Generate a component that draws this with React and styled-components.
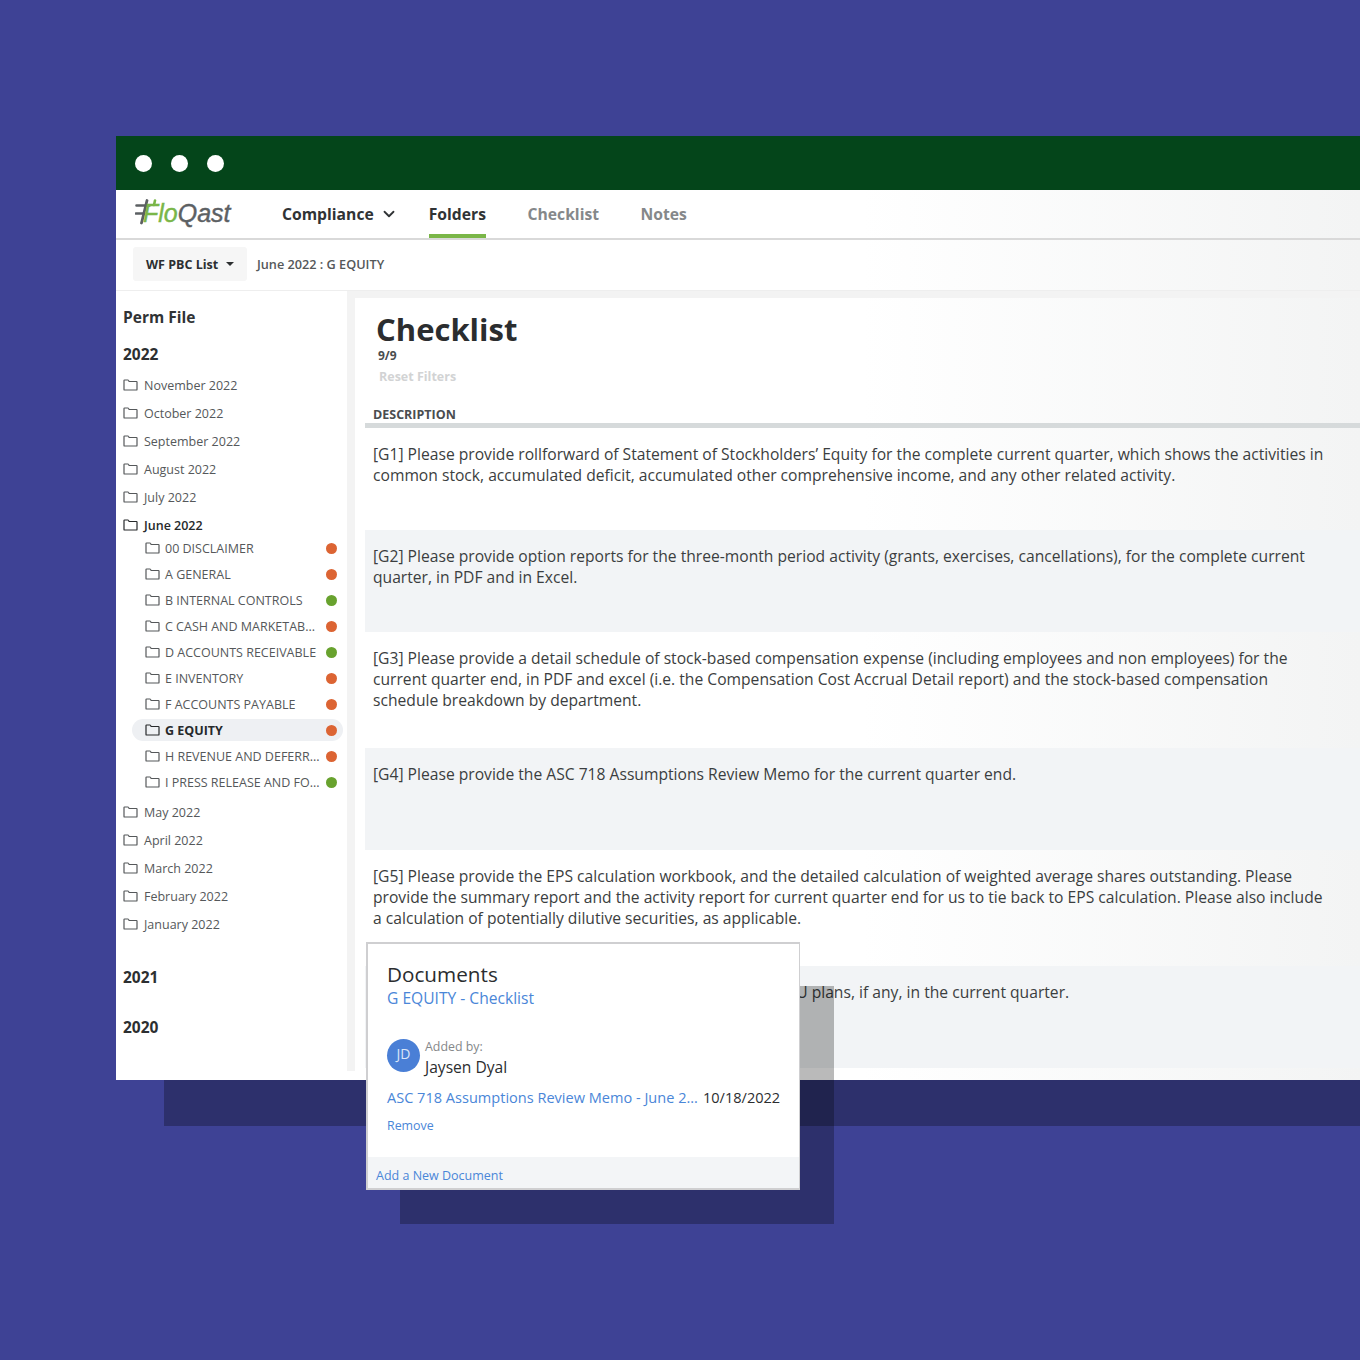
import React from "react";
import styled, { createGlobalStyle } from "styled-components";
import { ChevronDown } from "lucide-react";

const months2022 = ["November 2022", "October 2022", "September 2022", "August 2022", "July 2022"];
const monthsAfter = ["May 2022", "April 2022", "March 2022", "February 2022", "January 2022"];

const folders = [
  { name: "00 DISCLAIMER", status: "late" },
  { name: "A GENERAL", status: "late" },
  { name: "B INTERNAL CONTROLS", status: "done" },
  { name: "C CASH AND MARKETAB...", status: "late" },
  { name: "D ACCOUNTS RECEIVABLE", status: "done" },
  { name: "E INVENTORY", status: "late" },
  { name: "F ACCOUNTS PAYABLE", status: "late" },
  { name: "G EQUITY", status: "late", active: true },
  { name: "H REVENUE AND DEFERR...", status: "late" },
  { name: "I PRESS RELEASE AND FO...", status: "done" },
];

const requests = [
  "[G1] Please provide rollforward of Statement of Stockholders’ Equity for the complete current quarter, which shows the activities in common stock, accumulated deficit, accumulated other comprehensive income, and any other related activity.",
  "[G2] Please provide option reports for the three-month period activity (grants, exercises, cancellations), for the complete current quarter, in PDF and in Excel.",
  "[G3] Please provide a detail schedule of stock-based compensation expense (including employees and non employees) for the current quarter end, in PDF and excel (i.e. the Compensation Cost Accrual Detail report) and the stock-based compensation schedule breakdown by department.",
  "[G4] Please provide the ASC 718 Assumptions Review Memo for the current quarter end.",
  "[G5] Please provide the EPS calculation workbook, and the detailed calculation of weighted average shares outstanding. Please provide the summary report and the activity report for current quarter end for us to tie back to EPS calculation. Please also include a calculation of potentially dilutive securities, as applicable.",
  "[G6] Please provide a summary of any changes to ESPP/RSU plans, if any, in the current quarter.",
];

const FolderIcon = ({ size = 15 }) => (
  <svg width={size} height={size - 3} viewBox="0 0 15 12" fill="none" stroke="currentColor" strokeWidth="1.2">
    <path d="M1 10.4V1.6c0-.4.2-.6.6-.6h3.2c.3 0 .5.1.6.3l.7 1.2h7.3c.4 0 .6.2.6.6v7.3c0 .4-.2.6-.6.6H1.6c-.4 0-.6-.2-.6-.6z" />
  </svg>
);

const HashMark = () => (
  <svg width="22" height="26" viewBox="0 0 22 26" fill="none" strokeLinecap="round">
    <path d="M1.5 6.5h13M1 14.5h8" stroke="#5c6063" strokeWidth="2.6" />
    <path d="M12 1.5 6.5 24" stroke="#5c6063" strokeWidth="2.8" />
    <path d="M20 1.5l-1 4.5" stroke="#7ab648" strokeWidth="2.6" />
  </svg>
);

export default function App() {
  return (
    <>
      <GlobalStyle />
      <Scene>
        <Window>
          <TitleBar>
            <Light />
            <Light />
            <Light />
          </TitleBar>

          <NavBar>
            <Logo>
              <HashMark />
              <LogoWord>
                <em>Flo</em>Qast
              </LogoWord>
            </Logo>
            <NavItem $strong $tight>
              Compliance <ChevronDown size={18} strokeWidth={2.4} />
            </NavItem>
            <NavItem $strong $active>Folders</NavItem>
            <NavItem>Checklist</NavItem>
            <NavItem>Notes</NavItem>
          </NavBar>

          <SubBar>
            <ListButton>
              WF PBC List <Caret />
            </ListButton>
            <Crumb>June 2022 : G EQUITY</Crumb>
          </SubBar>

          <Body>
            <Sidebar>
              <Heading>Perm File</Heading>
              <Year>2022</Year>
              {months2022.map((m) => (
                <Month key={m}>
                  <FolderIcon />
                  {m}
                </Month>
              ))}
              <Month $open>
                <FolderIcon />
                June 2022
              </Month>
              <FolderList>
                {folders.map((f) => (
                  <FolderRow key={f.name} $active={f.active}>
                    <FolderIcon size={15} />
                    <FolderName>{f.name}</FolderName>
                    <Dot $status={f.status} />
                  </FolderRow>
                ))}
              </FolderList>
              {monthsAfter.map((m) => (
                <Month key={m}>
                  <FolderIcon />
                  {m}
                </Month>
              ))}
              <Year $gap={26}>2021</Year>
              <Year $gap={24}>2020</Year>
            </Sidebar>

            <Main>
              <Title>Checklist</Title>
              <Count>9/9</Count>
              <Reset>Reset Filters</Reset>
              <TableHead>DESCRIPTION</TableHead>
              {requests.map((r, i) => (
                <Row key={r.slice(0, 4)} $shaded={i % 2 === 1}>
                  {r}
                </Row>
              ))}
            </Main>
          </Body>

          <Popup>
            <Card>
              <CardBody>
                <CardTitle>Documents</CardTitle>
                <CardLink>G EQUITY - Checklist</CardLink>
                <Person>
                  <Avatar>JD</Avatar>
                  <div>
                    <AddedBy>Added by:</AddedBy>
                    <PersonName>Jaysen Dyal</PersonName>
                  </div>
                </Person>
                <DocRow>
                  <DocLink>ASC 718 Assumptions Review Memo - June 2...</DocLink>
                  <DocDate>10/18/2022</DocDate>
                </DocRow>
                <Remove>Remove</Remove>
              </CardBody>
              <CardFooter>Add a New Document</CardFooter>
            </Card>
          </Popup>
        </Window>
      </Scene>
    </>
  );
}

// Styles
const GlobalStyle = createGlobalStyle`
  html, body {
    margin: 0;
    padding: 0;
    background: #3e4295;
  }
  * {
    box-sizing: border-box;
  }
`;

const Scene = styled.div`
  width: 1360px;
  height: 1360px;
  padding: 136px 0 0 116px;
  overflow: hidden;
  font-family: "Open Sans", "Liberation Sans", sans-serif;
  color: #3b3e40;
`;

const Window = styled.div`
  position: relative;
  display: flex;
  flex-direction: column;
  width: 1244px;
  height: 944px;
  background: linear-gradient(to right, #fff 60%, #f3f4f4 100%);
  box-shadow: 48px 46px 0 rgba(0, 0, 0, 0.27);
`;

const TitleBar = styled.div`
  display: flex;
  align-items: center;
  gap: 19px;
  flex: none;
  height: 54px;
  padding-left: 19px;
  background: #04451a;
`;

const Light = styled.span`
  width: 17px;
  height: 17px;
  border-radius: 50%;
  background: #fff;
`;

const NavBar = styled.div`
  display: flex;
  align-items: stretch;
  flex: none;
  height: 50px;
  padding-left: 19px;
  border-bottom: 2px solid #d9d9d9;
`;

const Logo = styled.div`
  display: flex;
  align-items: center;
  width: 147px;
  padding-bottom: 4px;
`;

const LogoWord = styled.span`
  margin: 3px 0 0 -14px;
  font-family: "Liberation Sans", sans-serif;
  font-size: 25px;
  font-style: italic;
  -webkit-text-stroke: 0.4px currentColor;
  color: #5c6063;

  em {
    color: #7ab648;
  }
`;

const NavItem = styled.div`
  display: flex;
  align-items: center;
  gap: 6px;
  height: 48px;
  margin-right: ${(p) => (p.$tight ? "31px" : "41.5px")};
  padding-top: 4px;
  font-size: 15.7px;
  font-weight: 700;
  white-space: nowrap;
  color: ${(p) => (p.$strong ? "#303335" : "#85888a")};
  border-bottom: 4px solid ${(p) => (p.$active ? "#7ab648" : "transparent")};
`;

const SubBar = styled.div`
  display: flex;
  align-items: center;
  flex: none;
  height: 51px;
  padding: 0 0 2px 17px;
  border-bottom: 1px solid #eeeeee;
`;

const ListButton = styled.div`
  display: flex;
  align-items: center;
  gap: 8px;
  width: 114px;
  height: 34px;
  padding-left: 13px;
  border-radius: 3px;
  background: #f6f6f6;
  font-size: 12.5px;
  font-weight: 700;
  white-space: nowrap;
  color: #2c2f31;
`;

const Caret = styled.span`
  width: 0;
  height: 0;
  border-left: 4px solid transparent;
  border-right: 4px solid transparent;
  border-top: 4px solid #2c2f31;
`;

const Crumb = styled.div`
  margin-left: 10px;
  font-size: 12.7px;
  font-weight: 600;
  color: #55585a;
`;

const Body = styled.div`
  display: flex;
  flex: 1;
  min-height: 0;
`;

const Sidebar = styled.aside`
  flex: none;
  width: 239px;
  height: 780px;
  padding: 14px 0 0 7px;
  background: #fff;
  border-right: 8px solid #f3f3f3;
`;

const Heading = styled.div`
  height: 24px;
  font-size: 15.5px;
  line-height: 24px;
  font-weight: 700;
  color: #303335;
`;

const Year = styled.div`
  height: 26px;
  margin-top: ${(p) => p.$gap ?? 12}px;
  margin-bottom: 4px;
  font-size: 15.5px;
  line-height: 26px;
  font-weight: 700;
  color: #2c2f31;
`;

const Month = styled.div`
  display: flex;
  align-items: center;
  gap: 6px;
  height: 28px;
  font-size: 12.5px;
  font-weight: ${(p) => (p.$open ? 600 : 400)};
  color: ${(p) => (p.$open ? "#26292b" : "#55585a")};

  svg {
    flex: none;
  }
`;

const FolderList = styled.div`
  display: flex;
  flex-direction: column;
  margin: -4px 0 3px 9px;
`;

const FolderRow = styled.div`
  display: flex;
  align-items: center;
  gap: 5px;
  width: 211px;
  height: 22px;
  margin: 2px 0;
  padding: 0 6px 0 13px;
  border-radius: 11px;
  background: ${(p) => (p.$active ? "#eef0f3" : "transparent")};
  font-size: 12.5px;
  font-weight: ${(p) => (p.$active ? 700 : 400)};
  color: ${(p) => (p.$active ? "#26292b" : "#55585a")};

  svg {
    flex: none;
  }
`;

const FolderName = styled.span`
  flex: 1;
  white-space: nowrap;
`;

const Dot = styled.span`
  flex: none;
  width: 11px;
  height: 11px;
  border-radius: 50%;
  background: ${(p) => (p.$status === "done" ? "#68a22e" : "#dc6433")};
`;

const Main = styled.main`
  flex: 1;
  min-width: 0;
  padding: 15px 0 0 10px;
  border-top: 7px solid #f3f3f3;
`;

const Title = styled.h1`
  margin: 0 0 0 11px;
  font-size: 31px;
  line-height: 32px;
  font-weight: 700;
  color: #2b2d2f;
`;

const Count = styled.div`
  margin: 3px 0 0 13px;
  font-size: 12px;
  line-height: 15px;
  font-weight: 700;
  color: #4a4d4f;
`;

const Reset = styled.div`
  margin: 5px 0 0 14px;
  font-size: 12.5px;
  line-height: 18px;
  font-weight: 700;
  color: #d2d3d4;
`;

const TableHead = styled.div`
  height: 42px;
  padding: 20px 0 0 8px;
  border-bottom: 5px solid #d6dadb;
  font-size: 12.5px;
  line-height: 18px;
  font-weight: 700;
  color: #4a4d4f;
`;

const Row = styled.div`
  min-height: 102px;
  padding: 16px 28px 37px 8px;
  background: ${(p) => (p.$shaded ? "#f2f4f6" : "transparent")};
  font-size: 15.65px;
  line-height: 21px;
  color: #3b3e40;
`;

const Popup = styled.div`
  position: absolute;
  z-index: 2;
  left: 250px;
  top: 806px;
  width: 434px;
  height: 248px;

  &::before {
    content: "";
    position: absolute;
    z-index: -1;
    left: 34px;
    top: 44px;
    right: -34px;
    bottom: -34px;
    background: rgba(0, 0, 0, 0.27);
  }
`;

const Card = styled.div`
  display: flex;
  flex-direction: column;
  height: 100%;
  border: 2px solid #cfcfd1;
  border-right-width: 1px;
  background: #fff;
`;

const CardBody = styled.div`
  flex: 1;
  padding: 16px 0 0 19px;
`;

const CardTitle = styled.div`
  font-size: 20.7px;
  line-height: 28px;
  color: #2b2d2f;
`;

const CardLink = styled.div`
  font-size: 15.6px;
  line-height: 20px;
  color: #4a86d8;
`;

const Person = styled.div`
  display: flex;
  gap: 5px;
  margin-top: 31px;
`;

const Avatar = styled.div`
  display: flex;
  align-items: center;
  justify-content: center;
  width: 33px;
  height: 33px;
  padding-bottom: 4px;
  border-radius: 50%;
  background: #4a7fd6;
  font-size: 14px;
  color: #dbe6f8;
`;

const AddedBy = styled.div`
  margin-top: -1px;
  font-size: 12.4px;
  line-height: 18px;
  color: #85888a;
`;

const PersonName = styled.div`
  font-size: 15.6px;
  line-height: 22px;
  color: #2b2d2f;
`;

const DocRow = styled.div`
  display: flex;
  gap: 5px;
  margin-top: 9px;
  font-size: 14.55px;
  line-height: 20px;
  white-space: nowrap;
`;

const DocLink = styled.span`
  color: #4a86d8;
`;

const DocDate = styled.span`
  color: #2b2d2f;
`;

const Remove = styled.div`
  margin-top: 10px;
  font-size: 12.4px;
  line-height: 18px;
  color: #4a86d8;
`;

const CardFooter = styled.div`
  flex: none;
  height: 31px;
  padding: 10px 0 0 8px;
  background: #f3f5f7;
  font-size: 12.5px;
  line-height: 18px;
  color: #4a86d8;
`;
